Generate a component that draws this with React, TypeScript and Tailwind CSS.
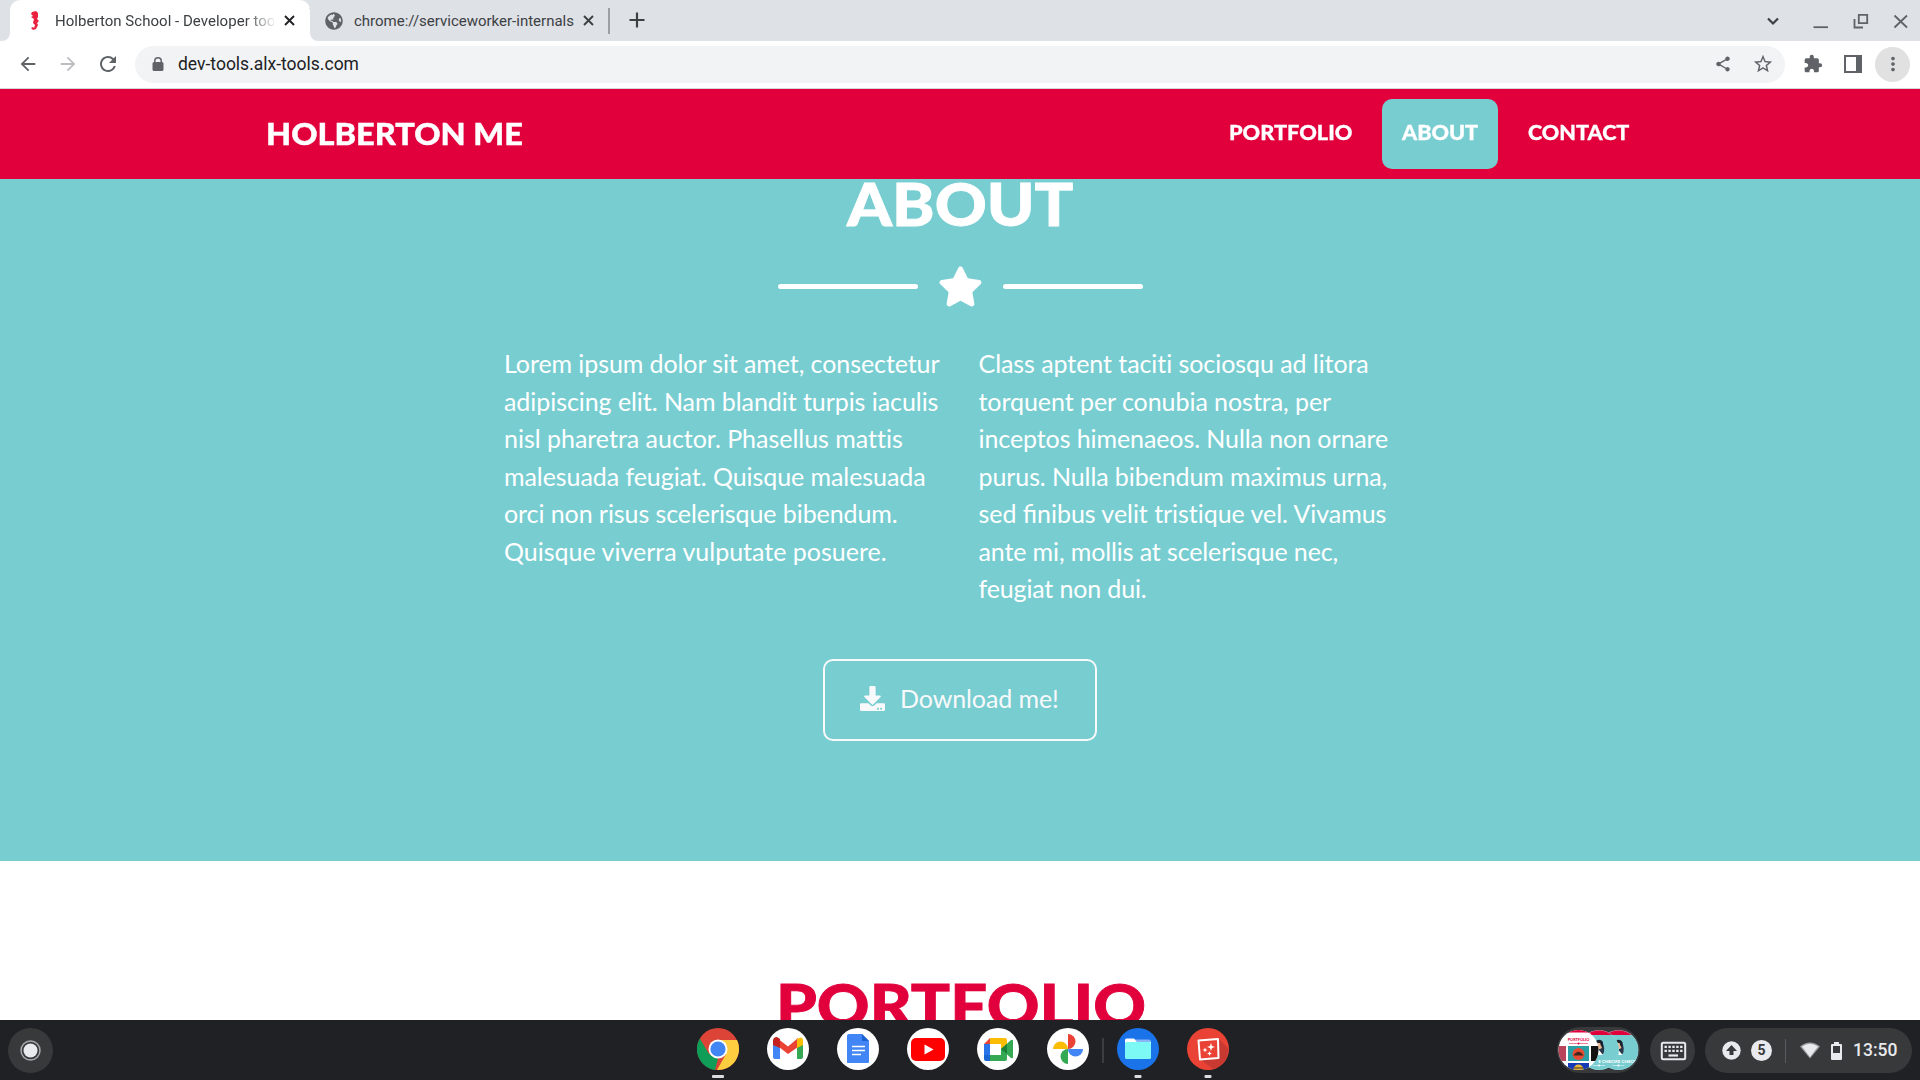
import React from 'react';
import { FaStar, FaDownload, FaGlobeAmericas } from 'react-icons/fa';
import { MdArrowBack, MdArrowForward, MdRefresh, MdShare, MdStarBorder, MdExtension, MdMoreVert } from 'react-icons/md';

const Stretch = ({ children, w, className }: { children: string; w: string; className: string }) => (
  <span className={'block shrink-0 ' + w}>
    <span className={'block w-max origin-left whitespace-nowrap font-["Lato",sans-serif] font-black leading-none [-webkit-text-stroke:0.014em_currentColor] ' + className}>{children}</span>
  </span>
);

const Cross = ({ className }: { className: string }) => (
  <svg className={'shrink-0 ' + className} width="17" height="17" viewBox="0 0 17 17"><path d="M4 4L13 13M13 4L4 13" stroke="currentColor" strokeWidth="1.900" /></svg>
);

function TabStrip() {
  return (
    <div className="flex h-[41px] shrink-0 items-stretch bg-[#dee1e6] pl-[10px] text-[#3c4043]">
      <div className="relative flex w-[300px] items-center rounded-t-[10px] bg-white">
        <svg className="absolute -left-[8px] bottom-0" width="8" height="8"><path d="M8 0V8H0A8 8 0 0 0 8 0Z" fill="#fff" /></svg>
        <svg className="absolute -right-[8px] bottom-0" width="8" height="8"><path d="M0 0V8H8A8 8 0 0 1 0 0Z" fill="#fff" /></svg>
        <svg className="ml-[20px]" width="10" height="20" viewBox="0 0 10 20"><path d="M2 1L6 0L8 2V6L7 8L9 10L7 12L8 14L6 18L3 19L1 17L3 16L4 17L5 14L3 12L4 8L1 6L3 5L1 3Z" fill="#e9203f" /></svg>
        <div className="ml-[15px] w-[219px] overflow-hidden whitespace-nowrap text-[15px] leading-[20px] tracking-[0.03px] [mask-image:linear-gradient(to_right,#000_190px,transparent_222px)]">Holberton School - Developer tools</div>
        <Cross className="ml-[7px] text-[#202124]" />
      </div>
      <div className="flex w-[298px] items-center">
        <div className="-ml-px h-[26px] w-px bg-[#9aa0a6]" />
        <FaGlobeAmericas className="ml-[15px] size-[18px] text-[#5f6368]" />
        <span className="ml-[11px] w-[220px] whitespace-nowrap pt-px text-[15px]">chrome://serviceworker-internals</span>
        <Cross className="ml-[6px] text-[#3c4043]" />
      </div>
      <div className="mt-[8px] h-[26px] w-[1.500px] bg-[#9aa0a6]" />
      <svg className="ml-[16px] mt-[9px] text-[#3c4043]" width="22" height="22" viewBox="0 0 22 22"><path d="M11 3.500V18.500M3.500 11H18.500" stroke="currentColor" strokeWidth="2.200" /></svg>
      <svg className="ml-auto" width="170" height="41" viewBox="0 0 170 41" fill="none" stroke="#5f6368" strokeWidth="1.8">
        <path d="M18 18.500L23 23.500L28 18.500" stroke="#3c4043" strokeWidth="2.200" />
        <path d="M63.500 27.200H78" />
        <path d="M108.800 14.800H117.200V23.200H108.800ZM104.500 19V27.500H113" />
        <path d="M144.500 15.500L157 27.500M157 15.500L144.500 27.500" />
      </svg>
    </div>
  );
}

function Toolbar() {
  return (
    <div className="flex h-[48px] shrink-0 items-center border-b border-[#d5d7da] bg-white pb-[1px] text-[#5f6368]">
      <MdArrowBack className="ml-[17px] size-[22px]" />
      <MdArrowForward className="ml-[18px] size-[22px] text-[#bcbec1]" />
      <MdRefresh className="ml-[17px] size-[24px]" />
      <div className="ml-[15px] flex h-[37px] w-[1650px] items-center rounded-full bg-[#f1f3f4]">
        <svg className="ml-[17px]" width="12" height="15" viewBox="0 0 12 15"><path d="M2 5V4A4 4 0 0 1 10 4V5Q11.500 5 11.500 6.500V12.500Q11.500 14 10 14H2Q.5 14 .5 12.500V6.500Q.5 5 2 5ZM3.500 5H8.500V4A2.500 2.500 0 0 0 3.500 4Z" fill="#5f6368" fillRule="evenodd" /></svg>
        <span className="ml-[14px] text-[17.500px] text-[#202124]">dev-tools.alx-tools.com</span>
        <MdShare className="ml-auto size-[18px]" />
        <MdStarBorder className="ml-[20px] mr-[11px] size-[22px]" />
      </div>
      <MdExtension className="ml-[18px] size-[20px]" />
      <svg className="ml-[21px]" width="18" height="18" viewBox="0 0 18 18"><path d="M0 0H18V18H0ZM2 2V16H12V2Z" fill="#5f6368" fillRule="evenodd" /></svg>
      <div className="ml-[13px] flex size-[35px] items-center justify-center rounded-full bg-[#e1e1e1]"><MdMoreVert className="size-[22px]" /></div>
    </div>
  );
}

function SiteNav() {
  return (
    <nav className="flex h-[90px] shrink-0 items-center bg-[#e1003c] pl-[266px] text-white">
      <Stretch w="w-[260px] pb-[2px]" className="scale-x-[1.083] text-[30px]">HOLBERTON ME</Stretch>
      <div className="ml-auto mr-[270px] flex items-center gap-[10px]">
        <div className="flex h-[70px] items-center pb-[4px] pl-[21px] pr-[19px]"><Stretch w="w-[124px]" className="scale-x-[1.086] text-[20px]">PORTFOLIO</Stretch></div>
        <div className="flex h-[70px] w-[116px] items-center rounded-[10px] bg-[#78cdd1] px-[20px] pb-[4px]"><Stretch w="w-[76px]" className="scale-x-[1.08] text-[20px]">ABOUT</Stretch></div>
        <div className="flex h-[70px] items-center px-[20px] pb-[4px]"><Stretch w="w-[102px]" className="scale-x-[1.078] text-[20px]">CONTACT</Stretch></div>
      </div>
    </nav>
  );
}

type Line = [string, string];
const left: Line[] = [
  ['Lorem ipsum dolor sit amet, consectetur', 'tracking-[-0.09px]'],
  ['adipiscing elit. Nam blandit turpis iaculis', 'tracking-[-0.06px]'],
  ['nisl pharetra auctor. Phasellus mattis', 'tracking-[-0.02px]'],
  ['malesuada feugiat. Quisque malesuada', 'tracking-[-0.065px]'],
  ['orci non risus scelerisque bibendum.', 'tracking-[-0.08px]'],
  ['Quisque viverra vulputate posuere.', ''],
];
const right: Line[] = [
  ['Class aptent taciti sociosqu ad litora', 'tracking-[-0.065px]'],
  ['torquent per conubia nostra, per', 'tracking-[-0.055px]'],
  ['inceptos himenaeos. Nulla non ornare', 'tracking-[-0.09px]'],
  ['purus. Nulla bibendum maximus urna,', 'tracking-[-0.09px]'],
  ['sed finibus velit tristique vel. Vivamus', 'tracking-[-0.04px]'],
  ['ante mi, mollis at scelerisque nec,', 'tracking-[-0.12px]'],
  ['feugiat non dui.', 'tracking-[-0.15px]'],
];

const Column = ({ lines }: { lines: Line[] }) => (
  <>
    {lines.map(([text, tracking]) => (
      <p key={text} className={tracking}>
        {text.split(/(fi)/).map((part, i) => (part === 'fi' ? <span key={i} className="tracking-normal">{part}</span> : part))}
      </p>
    ))}
  </>
);

function About() {
  return (
    <section className="flex h-[682px] shrink-0 flex-col items-center bg-[#78cdd1] font-['Lato',sans-serif] text-white">
      <div className="mt-[-5px] flex h-[60px] justify-center"><Stretch w="w-[226px]" className="scale-x-[1.088] text-[59px]">ABOUT</Stretch></div>
      <div className="mt-[31px] flex h-[42px] items-center gap-[20px]">
        <div className="h-[5px] w-[140px] rounded-full bg-white" />
        <FaStar className="size-[45px]" />
        <div className="h-[5px] w-[140px] rounded-full bg-white" />
      </div>
      <div className="mt-[38px] flex w-[912px] whitespace-nowrap text-[25px] leading-[37.500px]">
        <div className="w-[474.500px]"><Column lines={left} /></div>
        <div><Column lines={right} /></div>
      </div>
      <div className="mt-[51px] flex h-[82px] w-[274px] items-center rounded-[10px] border-2 border-[#f8f9fa] pb-[2px] pl-[35px] text-[25px] text-[#f8f9fa]">
        <FaDownload className="size-[25px]" /><span className="ml-[15px] whitespace-nowrap tracking-[-0.1px]">Download me!</span>
      </div>
    </section>
  );
}

const Disc = ({ children, run, bg = '#fff' }: { children: React.ReactNode; run?: string; bg?: string }) => (
  <svg width="42" height="60" viewBox="0 0 42 60" className="shrink-0">
    <circle cx="21" cy="29" r="21" fill={bg} />
    {children}
    {run && <rect x={run === 'wide' ? 15 : 17.500} y="55" width={run === 'wide' ? 12 : 7} height="3" rx="1" fill="#dadce0" />}
  </svg>
);

function Dock() {
  return (
    <div className="flex items-start gap-[28px]">
      <Disc run="wide" bg="#db4437">
        <path d="M2.800 18.500L12 34L21 38.500L18 50A21 21 0 0 1 2.800 18.500Z" fill="#0f9d58" />
        <path d="M21 20H40A21 21 0 0 1 20 50L29 34Z" fill="#ffcd40" />
        <circle cx="21" cy="29" r="9.500" fill="#fff" /><circle cx="21" cy="29" r="7.600" fill="#4285f4" />
      </Disc>
      <Disc>
        <path d="M6 20H13V39H8Q6 39 6 37Z" fill="#4285f4" /><path d="M30 20H36V37Q36 39 34 39H30Z" fill="#34a853" />
        <path d="M10 18L21 26.500L31 18V27L21 34L12 27Z" fill="#ea4335" />
        <path d="M6 25V21Q6 17 10 17L13 19V28Z" fill="#c5221f" /><path d="M30 19Q36 15 36 21V25L30 28Z" fill="#fbbc04" />
      </Disc>
      <Disc>
        <path d="M12 14H25L32 21V42Q32 43 31 43H11Q10 43 10 42V16Q10 14 12 14Z" fill="#4285f4" /><path d="M25 14L32 21H25Z" fill="#1a62cf" />
        <path d="M15 26.500H28M15 30.500H28M15 34.500H24" stroke="#fff" strokeWidth="1.600" />
      </Disc>
      <Disc><rect x="4" y="18" width="34" height="23" rx="5" fill="#f00" /><path d="M17.500 24.500L26.500 29.500L17.500 34.500Z" fill="#fff" /></Disc>
      <Disc>
        <path d="M13 18H28Q30 18 30 20V26L24 29V24H13Z" fill="#fbbc04" /><path d="M7 24L13 18V24Z" fill="#ea4335" /><path d="M7 24H13V35H7Z" fill="#2a74eb" />
        <path d="M7 35H13V41H9Q7 41 7 39Z" fill="#1967d2" /><path d="M13 35H24V29L30 27V39Q30 41 28 41H13Z" fill="#34a853" /><path d="M24 29L34 20Q36 19 36 21V37Q36 39 34 38Z" fill="#34a853" /><path d="M24 29L30 24V34Z" fill="#188038" />
      </Disc>
      <Disc>
        <path d="M21 14A7.500 7.500 0 0 1 21 29Z" fill="#ea4335" /><path d="M21 29H36A7.500 7.500 0 0 1 21 29Z" fill="#4285f4" /><path d="M21 29V44A7.500 7.500 0 0 1 21 29Z" fill="#34a853" /><path d="M21 29H6A7.500 7.500 0 0 1 21 29Z" fill="#fbbc04" />
      </Disc>
      <div className="-mx-[15px] mt-[18px] h-[25px] w-[2px] bg-[#3b3d40]" />
      <Disc run="narrow" bg="#1a73e8">
        <path d="M8 20Q8 18.500 9.500 18.500H17L20 21.500H34V28H8Z" fill="#fff" /><path d="M18 19.500H32Q34 19.500 34 22H20Z" fill="#8ab4f8" /><rect x="8" y="22" width="26" height="17" rx="1.500" fill="#7cf8f5" />
      </Disc>
      <Disc run="narrow" bg="#ea4335">
        <path d="M32 19L41 28A20 20 0 0 1 26 49L14 40Z" fill="#c83a31" />
        <path d="M11.500 20.500L31 19L31.500 38L13 39.500Z" fill="#ea4335" stroke="#fff" strokeWidth="2" strokeLinejoin="round" />
        <path d="M24 23L25 26L28 27L25 28L24 31L23 28L20 27L23 26ZM18 27.500L18.700 29.300L20.500 30L18.700 30.700L18 32.500L17.300 30.700L15.500 30L17.300 29.300ZM22.500 31L23.200 32.800L25 33.500L23.200 34.200L22.500 36L21.800 34.200L20 33.500L21.800 32.800Z" fill="#fff" />
      </Disc>
    </div>
  );
}

const Person = ({ x }: { x: number }) => (
  <g transform={`translate(${x} 0)`}>
    <path d="M-1 14Q4 13 5 20Q6 25 3 28L-4 27Q2 24 -1 14Z" fill="#283648" />
    <path d="M-4 28Q-3 23 0 23L4 28Z" fill="#fff" />
    <circle cx="-.5" cy="18.500" r="3.800" fill="#e8b793" />
    <path d="M-3 14Q1 11 4 15V21L2 19L1 16L-3 16Z" fill="#18232f" />
  </g>
);

function Shelf() {
  return (
    <footer className="flex h-[60px] shrink-0 items-start bg-[#202124]">
      <svg className="ml-[8px] mt-[8px]" width="45" height="45"><circle cx="22.500" cy="22.500" r="22.500" fill="#38393b" /><circle cx="22.500" cy="22.500" r="9.500" fill="none" stroke="#a5a7aa" strokeWidth="1.500" /><circle cx="22.500" cy="22.500" r="7" fill="#e8eaed" /></svg>
      <div className="ml-[643.500px]"><Dock /></div>
      <svg className="ml-auto mt-[7px]" width="83" height="46" viewBox="0 0 83 46">
        <defs><clipPath id="c1"><circle cx="21.500" cy="23" r="20" /></clipPath><clipPath id="c2"><circle cx="42" cy="23" r="20" /></clipPath><clipPath id="c3"><circle cx="61.500" cy="23" r="20" /></clipPath></defs>
        <rect width="83" height="46" rx="23" fill="#38393b" />
        {[{ c: 'url(#c3)', x: 61.5, t: 'RE CHECK' }, { c: 'url(#c2)', x: 42, t: 'E CHECK' }].map((b) => (
          <g key={b.x} clipPath={b.c}>
            <rect x={b.x - 20} y="3" width="40" height="40" fill="#78cdd1" /><rect x={b.x - 20} y="3" width="40" height="5" fill="#e1003c" />
            <Person x={b.x} />
            <text x={b.x + 18} y="35.500" textAnchor="end" fontSize="4.500" fontWeight="900" fontFamily="Lato, sans-serif" fill="#fff">{b.t}</text>
            <path d={`M${b.x - 6} 38.500H${b.x + 6}`} stroke="#fff" strokeWidth=".5" /><circle cx={b.x} cy="38.500" r="1" fill="#fff" />
            <circle cx={b.x} cy="23" r="19.900" fill="none" stroke="#a5dfe1" strokeWidth=".5" />
          </g>
        ))}
        <g clipPath="url(#c1)">
          <rect width="42" height="46" fill="#fff" /><rect width="42" height="5.500" fill="#e1003c" />
          <text x="21.500" y="14" textAnchor="middle" fontSize="3.800" fontWeight="900" fontFamily="Lato, sans-serif" fill="#e1003c">PORTFOLIO</text>
          <path d="M12 16.500H31" stroke="#e1003c" strokeWidth=".5" /><circle cx="21.500" cy="16.500" r="1" fill="#e1003c" />
          <rect x="0" y="19" width="9" height="15" fill="#b9455c" /><rect x="11" y="19" width="21" height="15" fill="#2c9fa5" /><rect x="34" y="19" width="9" height="15" fill="#111" />
          <circle cx="21.500" cy="27" r="6" fill="#e84b33" /><path d="M16.500 28.500Q21.500 21 26.500 28.500Z" fill="#41281c" /><rect x="11" y="36" width="21" height="10" fill="#1538b4" /><circle cx="21.500" cy="42.500" r="5" fill="#e9b83c" /><path d="M17 41H26" stroke="#41281c" strokeWidth="1.200" />
        </g>
      </svg>
      <svg className="ml-[10px] mt-[8px]" width="45" height="45" viewBox="0 0 45 45"><circle cx="22.500" cy="22.500" r="22.500" fill="#38393b" /><rect x="11.800" y="14.800" width="23.400" height="16.400" rx="1.500" fill="none" stroke="#e8eaed" strokeWidth="2" /><path d="M14.500 18.800H33M14.500 22.800H33" stroke="#e8eaed" strokeWidth="2.200" strokeDasharray="2.400 1.500" /><path d="M18.500 27.500H28" stroke="#e8eaed" strokeWidth="2.200" /></svg>
      <div className="ml-[10px] mr-[8px] mt-[8px] flex h-[45px] w-[207px] items-center rounded-full bg-[#38393b] text-[#e8eaed]">
        <svg className="ml-[17px]" width="19" height="19" viewBox="0 0 19 19"><circle cx="9.500" cy="9.500" r="9.200" fill="#e8eaed" /><path d="M9.500 4L15 10H11.500V14H7.500V10H4Z" fill="#38393b" /></svg>
        <span className="ml-[10px] flex size-[21px] items-center justify-center rounded-full bg-[#e8eaed] text-[14px] font-bold text-[#38393b]">5</span>
        <div className="ml-[13px] h-[24px] w-px bg-[#5a5c5f]" />
        <svg className="ml-[14px]" width="20" height="17" viewBox="0 0 20 17"><path d="M0 4.500Q10 -3.500 20 4.500L10 16.500Z" fill="#9b9da0" /><path d="M2 4.500Q10 -1 18 4.500L10 15Z" fill="#e8eaed" /></svg>
        <svg className="ml-[11px]" width="11" height="18" viewBox="0 0 11 18"><path d="M3 0H8V2H10Q11 2 11 3V17Q11 18 10 18H1Q0 18 0 17V3Q0 2 1 2H3ZM2 4V11H9V4Z" fill="#e8eaed" fillRule="evenodd" /></svg>
        <span className="ml-[11px] text-[17.500px] font-medium">13:50</span>
      </div>
    </footer>
  );
}

export default function App() {
  return (
    <div className="flex h-[1080px] w-[1920px] flex-col overflow-hidden bg-white font-['Roboto',sans-serif]">
      <TabStrip />
      <Toolbar />
      <SiteNav />
      <About />
      <section className="flex min-h-0 flex-1 justify-center overflow-hidden bg-white pt-[114px] text-[#e1003c]">
        <Stretch w="w-[369px]" className="scale-x-[1.104] text-[59px]">PORTFOLIO</Stretch>
      </section>
      <Shelf />
    </div>
  );
}
